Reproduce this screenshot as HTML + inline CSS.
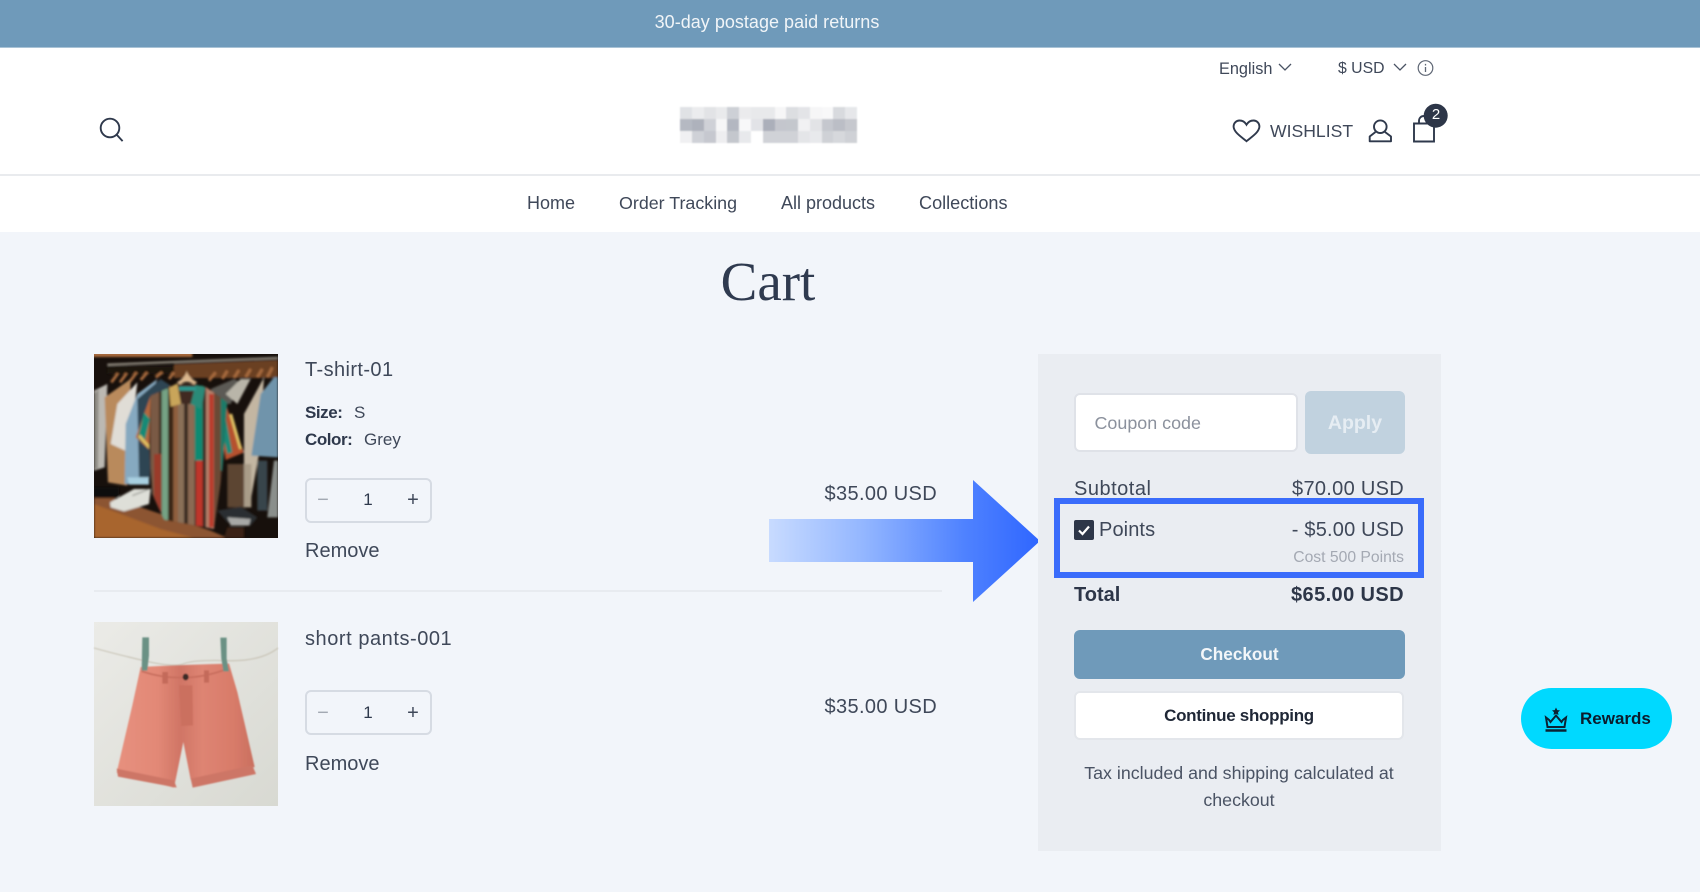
<!DOCTYPE html>
<html lang="en"><head><meta charset="utf-8"><title>Cart</title>
<style>
*{box-sizing:border-box;margin:0;padding:0}
html,body{width:1700px;height:892px;overflow:hidden;background:#f2f5fa;font-family:"Liberation Sans",Arial,sans-serif;color:#3f4859}
.t{position:absolute;white-space:nowrap;line-height:30px;height:30px;font-size:20px}
.box{position:absolute}
.r{text-align:right}
.c{text-align:center}
b{font-weight:700}
.qty{position:absolute;width:127px;height:45px;border:2px solid #d6dbe3;border-radius:6px}
svg{position:absolute;overflow:visible}
</style></head><body>

<div class="box" style="left:0;top:0;width:1700px;height:48px;background:#6f9aba;border-bottom:1px solid #a9c3d6"></div>
<div class="t c" style="left:567px;width:400px;top:7px;font-size:18px;letter-spacing:.02px;color:#f1f5f8">30-day postage paid returns</div>

<div class="box" style="left:0;top:48px;width:1700px;height:184px;background:#fff"></div>
<div class="box" style="left:0;top:174px;width:1700px;height:2px;background:#e9ebee"></div>

<div class="t" style="left:1219px;top:54px;font-size:16.3px">English</div>
<svg style="left:1278px;top:62px" width="14" height="10"><path d="M1 2l6 6 6-6" fill="none" stroke="#4a5364" stroke-width="1.3"/></svg>
<div class="t" style="left:1338px;top:54px;font-size:15.8px">$ USD</div>
<svg style="left:1393px;top:62px" width="14" height="10"><path d="M1 2l6 6 6-6" fill="none" stroke="#4a5364" stroke-width="1.3"/></svg>
<svg style="left:1417px;top:60px" width="17" height="17"><circle cx="8.5" cy="8" r="7.3" fill="none" stroke="#5f6775" stroke-width="1.2"/><path d="M8.5 7v5M8.5 3.900v1.600" stroke="#5f6775" stroke-width="1.3" fill="none"/></svg>

<svg style="left:99px;top:117px" width="26" height="26"><circle cx="11" cy="11" r="9.3" fill="none" stroke="#2f394c" stroke-width="1.9"/><path d="M17.6 17.6l6 6.500" stroke="#2f394c" stroke-width="1.9" fill="none"/></svg>

<svg style="left:680px;top:107px" width="177" height="36">
<defs><filter id="lb" x="-5%" y="-5%" width="110%" height="110%"><feGaussianBlur stdDeviation=".7"/></filter></defs>
<g filter="url(#lb)">
<rect x="0" y="0" width="12" height="12" fill="#e0e2e5"/><rect x="12" y="0" width="12" height="12" fill="#ebecee"/><rect x="24" y="0" width="12" height="12" fill="#e2e3e6"/><rect x="36" y="0" width="12" height="12" fill="#e9eaec"/><rect x="47" y="0" width="12" height="12" fill="#cdd0d6"/><rect x="59" y="0" width="12" height="12" fill="#ebebed"/><rect x="71" y="0" width="12" height="12" fill="#e8e9eb"/><rect x="83" y="0" width="12" height="12" fill="#e8e9eb"/><rect x="95" y="0" width="12" height="12" fill="#f6f6f7"/><rect x="106" y="0" width="12" height="12" fill="#dcdee1"/><rect x="118" y="0" width="12" height="12" fill="#e3e4e7"/><rect x="130" y="0" width="12" height="12" fill="#f6f6f7"/><rect x="142" y="0" width="12" height="12" fill="#f8f8f9"/><rect x="153" y="0" width="12" height="12" fill="#d8dade"/><rect x="165" y="0" width="12" height="12" fill="#e6e7ea"/>
<rect x="0" y="12" width="12" height="12" fill="#b5b9c2"/><rect x="12" y="12" width="12" height="12" fill="#aeb2bc"/><rect x="24" y="12" width="12" height="12" fill="#cfd1d7"/><rect x="36" y="12" width="12" height="12" fill="#f6f6f7"/><rect x="47" y="12" width="12" height="12" fill="#b3b7c1"/><rect x="59" y="12" width="12" height="12" fill="#f8f8f9"/><rect x="71" y="12" width="12" height="12" fill="#e2e3e7"/><rect x="83" y="12" width="12" height="12" fill="#abafba"/><rect x="95" y="12" width="12" height="12" fill="#c4c6cd"/><rect x="106" y="12" width="12" height="12" fill="#c4c7cd"/><rect x="118" y="12" width="12" height="12" fill="#f1f1f3"/><rect x="130" y="12" width="12" height="12" fill="#e2e3e6"/><rect x="142" y="12" width="12" height="12" fill="#c5c7ce"/><rect x="153" y="12" width="12" height="12" fill="#bbbec6"/><rect x="165" y="12" width="12" height="12" fill="#c6c8ce"/>
<rect x="0" y="24" width="12" height="12" fill="#f0f0f2"/><rect x="12" y="24" width="12" height="12" fill="#cfd1d7"/><rect x="24" y="24" width="12" height="12" fill="#c6c8cf"/><rect x="36" y="24" width="12" height="12" fill="#eeeef0"/><rect x="47" y="24" width="12" height="12" fill="#c4c7cd"/><rect x="59" y="24" width="12" height="12" fill="#e8e9ec"/><rect x="71" y="24" width="12" height="12" fill="#ffffff"/><rect x="83" y="24" width="12" height="12" fill="#d0d2d7"/><rect x="95" y="24" width="12" height="12" fill="#d0d2d7"/><rect x="106" y="24" width="12" height="12" fill="#d0d2d7"/><rect x="118" y="24" width="12" height="12" fill="#e4e5e8"/><rect x="130" y="24" width="12" height="12" fill="#e8e9ec"/><rect x="142" y="24" width="12" height="12" fill="#cfd1d6"/><rect x="153" y="24" width="12" height="12" fill="#d6d8dc"/><rect x="165" y="24" width="12" height="12" fill="#cfd1d6"/>
</g></svg>

<svg style="left:1232px;top:119px" width="29" height="24"><path d="M14.5 22.2C9 17.6 1.6 13 1.6 7.4 1.6 3.9 4.3 1.5 7.5 1.5c2.9 0 5.4 1.5 7 4.2 1.6-2.7 4.1-4.2 7-4.2 3.2 0 5.9 2.4 5.9 5.9 0 5.6-7.4 10.2-12.9 14.8z" fill="none" stroke="#2f394c" stroke-width="1.9"/></svg>
<div class="t" style="left:1270px;top:116px;font-size:17.600px">WISHLIST</div>
<svg style="left:1368px;top:119px" width="25" height="24"><circle cx="12.300" cy="7.700" r="6.300" fill="none" stroke="#2f394c" stroke-width="1.900"/><path d="M7.500 13L1.700 17.500V22.300H23V17.500L17 13" fill="none" stroke="#2f394c" stroke-width="1.900" stroke-linejoin="round"/></svg>
<svg style="left:1412px;top:114px" width="36" height="30"><path d="M2 9.500h20v18H2zM7 9.500V7c0-3 2-5 5-5s5 2 5 5v2.500" fill="none" stroke="#2f394c" stroke-width="1.9"/><circle cx="23.700" cy="1.700" r="12" fill="#2d3648"/></svg>
<div class="t c" style="left:1416px;top:100px;width:40px;font-size:15px;color:#fff">2</div>

<div class="t" style="left:527px;top:188px;font-size:18px">Home</div>
<div class="t" style="left:619px;top:188px;font-size:17.850px">Order Tracking</div>
<div class="t" style="left:781px;top:188px;font-size:18px">All products</div>
<div class="t" style="left:919px;top:188px;font-size:18.100px">Collections</div>

<div class="t c" style="left:568px;width:400px;top:252px;height:60px;line-height:60px;font-family:'Liberation Serif',serif;font-size:55px;color:#2f3a4f">Cart</div>

<svg style="left:94px;top:354px" width="184" height="184" viewBox="0 0 552 552">
<defs><filter id="f1"><feGaussianBlur stdDeviation="3.200"/></filter>
<clipPath id="cs"><path d="M170 125L240 95H330L400 145 385 350 360 525 210 497 175 420 165 280Z"/></clipPath>
<clipPath id="box"><rect width="552" height="552"/></clipPath></defs>
<g clip-path="url(#box)"><rect width="552" height="552" fill="#17100c"/>
<g filter="url(#f1)">
<rect x="-5" y="-5" width="300" height="14" fill="#a86a3c"/>
<path d="M240 30L552 18V72H240Z" fill="#6a3f22"/><path d="M40 36H240V60H40Z" fill="#1d120c"/>
<path d="M40 32L552 12" stroke="#9a9488" stroke-width="6"/>
<path d="M52 85L72 58M78 85L98 58M108 82L128 55M140 78L160 55M185 70L205 55M225 75L240 55M345 80L365 55M385 75L400 50M420 72L435 48M455 70L470 45M490 70L505 45M520 70L535 40" stroke="#a76a3e" stroke-width="9"/>
<path d="M0 110L40 90 32 340 0 350Z" fill="#bcb9b2"/><path d="M0 118L14 106 12 345H0Z" fill="#8f8c85"/>
<path d="M32 130L110 75 100 395 42 385Z" fill="#b98a5c"/>
<path d="M50 270L70 150 130 85 105 295Z" fill="#e0ddd6"/>
<path d="M92 390L95 210 130 120 190 75 165 140 165 392Z" fill="#86a9c0"/>
<path d="M130 135L200 75 230 95 175 140 168 370 135 370Z" fill="#2f4552"/>
<path d="M100 370H165V392H105Z" fill="#a8cfe0"/>
<path d="M0 400H75V430H0Z" fill="#0b0807"/>
<path d="M350 105L420 75 440 85 410 150H370Z" fill="#5c5a54"/><path d="M395 120L440 75 470 75 430 150Z" fill="#b9b5a9"/>
<path d="M450 440L450 180 510 70 495 300 470 440Z" fill="#c3b6a2"/>
<path d="M472 305L500 120 540 70H552V310Z" fill="#6f94ab"/>
<path d="M520 490L540 320H552V490Z" fill="#8a8f8c"/><path d="M490 320H520V470H490Z" fill="#38454c"/><path d="M400 330H450V460H400Z" fill="#5c4432"/><path d="M450 330H472V460H450Z" fill="#a99c88"/>
<path d="M0 432H60L170 470 350 530 400 552H0Z" fill="#8c5530"/><path d="M0 450L200 525 300 552H0Z" fill="#a8652f"/>
<path d="M48 445L120 405H170L165 450 90 472 50 460Z" fill="#dedfd8"/><path d="M115 425L165 405" stroke="#9c9d97" stroke-width="4"/>
<path d="M370 470L440 458 490 490 470 515 400 505Z" fill="#2a2e32"/><path d="M400 490L470 495 465 515H410Z" fill="#a7a8a6"/>
<path d="M400 520H450V552H390Z" fill="#3a2417"/>
<path d="M170 125L125 250 175 295 197 190Z" fill="#b4683c"/><path d="M150 175L132 252 150 268 168 195Z" fill="#128a76"/><path d="M135 245L175 290" stroke="#e0bf60" stroke-width="9"/>
<path d="M395 150L450 295 395 318 375 200Z" fill="#b5512f"/><path d="M380 215L400 300 415 295 395 190Z" fill="#1f8a78"/><path d="M410 180L440 285" stroke="#e0c264" stroke-width="9"/>
<g clip-path="url(#cs)"><rect x="160" y="90" width="250" height="450" fill="#3b2a20"/>
<rect x="170" y="90" width="25" height="440" fill="#7a5a44"/><rect x="180" y="300" width="22" height="200" fill="#9a3a2c"/>
<rect x="203" y="90" width="19" height="440" fill="#75a284"/><rect x="222" y="90" width="16" height="440" fill="#3a2519"/>
<rect x="238" y="90" width="14" height="440" fill="#8f5f3c"/><rect x="252" y="90" width="18" height="440" fill="#8a7058"/>
<rect x="282" y="90" width="20" height="440" fill="#8b6a52"/><rect x="302" y="90" width="24" height="230" fill="#0f8a72"/><rect x="306" y="320" width="20" height="210" fill="#c0352c"/>
<rect x="336" y="90" width="24" height="440" fill="#b5806a"/><rect x="345" y="120" width="14" height="400" fill="#b93a2c"/><rect x="360" y="90" width="20" height="440" fill="#6a4a34"/><rect x="380" y="90" width="20" height="260" fill="#1f7a68"/></g>
<path d="M225 100L250 88 260 150 230 158Z" fill="#c9a55a"/><path d="M305 92L334 100 322 165 290 150Z" fill="#2a8a78"/><path d="M250 90H305L290 150H262Z" fill="#3f2a22"/><path d="M255 98H305V110H255Z" fill="#2a9a90"/>
<path d="M248 85Q276 70 278 50Q282 70 310 85L300 92Q278 75 258 92Z" fill="#dcb88e"/>
</g></g></svg>

<svg style="left:94px;top:622px" width="184" height="184" viewBox="0 0 552 552">
<defs><linearGradient id="bgs" x1="0" y1="0" x2="1" y2="1"><stop offset="0" stop-color="#ebebe7"/><stop offset="1" stop-color="#d8d9d2"/></linearGradient>
<filter id="f2"><feGaussianBlur stdDeviation="2.500"/></filter>
<linearGradient id="sh" x1="0" y1="0" x2="1" y2="0"><stop offset="0" stop-color="#e6907e"/><stop offset=".3" stop-color="#e28876"/><stop offset=".46" stop-color="#d07565"/><stop offset=".62" stop-color="#de8473"/><stop offset=".85" stop-color="#d87b69"/><stop offset="1" stop-color="#c96f5f"/></linearGradient></defs>
<rect width="552" height="552" fill="url(#bgs)"/>
<g filter="url(#f2)">
<path d="M0 78Q60 95 150 116T270 125T400 116T552 78" fill="none" stroke="#c9c5b8" stroke-width="3.500"/>
<path d="M140 135Q270 128 405 125L430 210 482 435 290 472 268 360 240 497 68 452 115 250Z" fill="url(#sh)"/>
<path d="M68 440L240 475 248 497 72 464Z" fill="#cd7666"/><path d="M290 470L475 430 486 456 296 497Z" fill="#cd7666"/>
<path d="M143 148Q270 190 402 140" fill="none" stroke="#c76d5d" stroke-width="5"/>
<path d="M255 190H295L297 310 262 312Z" fill="#cb6f5e"/><path d="M205 150H222V185H205ZM330 145H345V182H330Z" fill="#c46a5a"/>
<ellipse cx="275" cy="165" rx="9" ry="10" fill="#3a2a28"/>
<path d="M145 46H165V100L160 146H143Z" fill="#6b9184"/><path d="M379 47H398V110L405 148H388L382 110Z" fill="#6b9184"/>
</g></svg>

<div class="t" style="left:305px;top:355px;letter-spacing:.4px">T-shirt-01</div>
<div class="t" style="left:305px;top:398px;font-size:17px;color:#2f394c"><b style="letter-spacing:-.45px">Size:</b></div>
<div class="t" style="left:354px;top:398px;font-size:17px">S</div>
<div class="t" style="left:305px;top:425px;font-size:17px;color:#2f394c"><b style="letter-spacing:-.45px">Color:</b></div>
<div class="t" style="left:364px;top:425px;font-size:17px">Grey</div>
<div class="qty" style="left:305px;top:478px"></div>
<div class="t c" style="left:308px;width:30px;top:485px;font-size:20px;color:#a3a9b3">−</div>
<div class="t c" style="left:353px;width:30px;top:485px;font-size:17px;color:#2f394c">1</div>
<div class="t c" style="left:398px;width:30px;top:485px;font-size:20px;color:#3f4859">+</div>
<div class="t" style="left:305px;top:536px">Remove</div>
<div class="t r" style="right:763px;top:479px;letter-spacing:.35px">$35.00 USD</div>

<div class="box" style="left:94px;top:590px;width:848px;height:2px;background:#e8ebf0"></div>

<div class="t" style="left:305px;top:624px;letter-spacing:.55px">short pants-001</div>
<div class="qty" style="left:305px;top:690px"></div>
<div class="t c" style="left:308px;width:30px;top:698px;font-size:20px;color:#a3a9b3">−</div>
<div class="t c" style="left:353px;width:30px;top:698px;font-size:17px;color:#2f394c">1</div>
<div class="t c" style="left:398px;width:30px;top:698px;font-size:20px;color:#3f4859">+</div>
<div class="t" style="left:305px;top:749px">Remove</div>
<div class="t r" style="right:763px;top:692px;letter-spacing:.35px">$35.00 USD</div>

<svg style="left:769px;top:480px" width="272" height="122">
<defs><linearGradient id="ar" gradientUnits="userSpaceOnUse" x1="0" y1="0" x2="271" y2="0"><stop offset="0" stop-color="#c8dbff"/><stop offset=".35" stop-color="#93b6ff"/><stop offset=".72" stop-color="#4f82ff"/><stop offset="1" stop-color="#2f66ff"/></linearGradient></defs>
<path d="M0 39H204V0L271 61 204 122V82H0Z" fill="url(#ar)"/></svg>

<div class="box" style="left:1038px;top:354px;width:403px;height:497px;background:#eaedf2"></div>
<div class="box" style="left:1074px;top:393px;width:224px;height:59px;background:#fff;border:2px solid #dfe2e8;border-radius:6px"></div>
<div class="t" style="left:1094.500px;top:407px;font-size:17.900px;line-height:32px;color:#8b919d">Coupon code</div>
<div class="box" style="left:1305px;top:391px;width:100px;height:63px;background:#c1d2df;border-radius:6px"></div>
<div class="t c" style="left:1305px;width:100px;top:408px;font-size:19.500px;color:#e6edf3;font-weight:700">Apply</div>

<div class="t" style="left:1074px;top:474px;letter-spacing:.5px">Subtotal</div>
<div class="t r" style="right:296px;top:474px;letter-spacing:.3px">$70.00 USD</div>

<div class="box" style="left:1054px;top:498px;width:370px;height:80px;border:6px solid #3a6cfb"></div>
<div class="box" style="left:1074px;top:520px;width:20px;height:20px;background:#2d3648;border-radius:2px"></div>
<svg style="left:1074px;top:520px" width="20" height="20"><path d="M5 10.500l3.500 3.500 6.500-7.500" fill="none" stroke="#fff" stroke-width="2.200"/></svg>
<div class="t" style="left:1099px;top:515px;letter-spacing:.1px">Points</div>
<div class="t r" style="right:296px;top:515px;letter-spacing:.2px">- $5.00 USD</div>
<div class="t r" style="right:296px;top:543px;font-size:15.700px;color:#a4a9b3">Cost 500 Points</div>

<div class="t" style="left:1074px;top:580px;color:#2d3648;font-weight:700">Total</div>
<div class="t r" style="right:296px;top:580px;color:#2d3648;font-weight:700;letter-spacing:.4px">$65.00 USD</div>

<div class="box" style="left:1074px;top:630px;width:331px;height:49px;background:#6f9aba;border-radius:6px"></div>
<div class="t c" style="left:1074px;width:331px;top:639px;font-size:17.200px;color:#f3f6f9;font-weight:700">Checkout</div>
<div class="box" style="left:1074px;top:691px;width:330px;height:49px;background:#fff;border:2px solid #e3e6eb;border-radius:6px"></div>
<div class="t c" style="left:1074px;width:330px;top:701px;font-size:17px;color:#1f2736;font-weight:700;letter-spacing:-.3px">Continue shopping</div>
<div class="t c" style="left:1040px;width:398px;top:758px;font-size:17.800px;color:#4a5364">Tax included and shipping calculated at</div>
<div class="t c" style="left:1040px;width:398px;top:785px;font-size:17.800px;color:#4a5364">checkout</div>

<div class="box" style="left:1521px;top:688px;width:151px;height:61px;background:#00d9ff;border-radius:31px"></div>
<svg style="left:1544px;top:706px" width="24" height="27"><path d="M12 1.500l1.300 2.600 2.700.3-2 1.900.5 2.700-2.500-1.300-2.500 1.300.5-2.700-2-1.900 2.700-.3z" fill="#0b2233"/><path d="M2 11.500l1.500 9.500h17l1.500-9.500-3.200 2.500-1.300 2L12 9.500l-5.500 6.500-1.300-2z" fill="none" stroke="#0b2233" stroke-width="2"/><path d="M1.500 24.500h21" stroke="#0b2233" stroke-width="2.400"/></svg>
<div class="t" style="left:1580px;top:704px;font-size:17px;color:#0b1c2c;font-weight:700">Rewards</div>
</body></html>
